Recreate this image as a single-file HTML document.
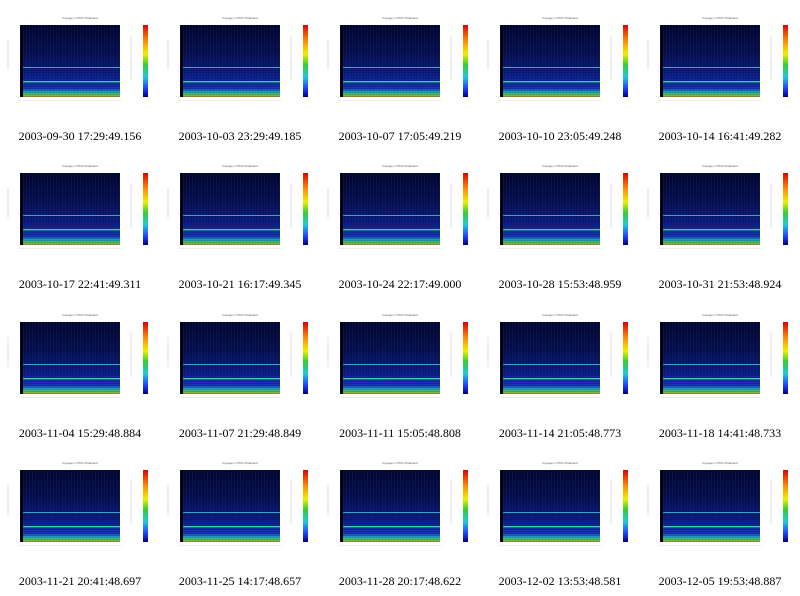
<!DOCTYPE html><html><head><style>
body{margin:0;width:800px;height:596px;background:#fff;position:relative;overflow:hidden;font-family:"Liberation Serif",serif}
.c{position:absolute;width:160px;height:148px}
.t{position:absolute;left:40px;top:16px;width:80px;text-align:center;font:3px "Liberation Sans",sans-serif;color:#666}
.p{position:absolute;left:20px;top:25px;width:100px;height:72px;background:
linear-gradient(to bottom,transparent 0,transparent 56px,#40d8a0 56px,#40d8a0 57.5px,transparent 57.5px),
linear-gradient(to bottom,transparent 0,transparent 42px,#30b0c8 42px,#30b0c8 43px,transparent 43px),
linear-gradient(to bottom,#02062a 0%,#06104e 40%,#0c1e86 70%,#1434b8 88%,#20b0c0 93%,#60d040 97%,#c8a020 100%)}
.p:before{content:"";position:absolute;left:0;top:0;width:3px;height:72px;background:#000}
.p:after{content:"";position:absolute;inset:0;background:repeating-linear-gradient(90deg,rgba(40,70,200,.15) 0 1px,transparent 1px 3px),repeating-linear-gradient(0deg,rgba(0,0,40,.2) 0 1px,transparent 1px 2px)}
.ax{position:absolute;left:18px;top:100px;width:104px;height:8px;border-top:1px solid #eee}
.cb{position:absolute;left:143px;top:25px;width:5px;height:72px;background:linear-gradient(to bottom,#e00000,#ff8000 20%,#f0f000 40%,#30d030 55%,#20c8e0 72%,#2040ff 88%,#000080)}
.yl{position:absolute;left:7px;top:40px;width:2px;height:30px;background:#eee}
.cl{position:absolute;left:130px;top:35px;width:2px;height:45px;background:#eee}
.cap{position:absolute;left:0;top:129px;width:160px;text-align:center;font-size:12px;line-height:14px;color:#000}
</style></head><body>
<div class="c" style="left:0;top:0"><div class="t">Voyager-1 PWS Wideband</div><div class="yl"></div><div class="p"></div><div class="ax"></div><div class="cl"></div><div class="cb"></div><div class="cap">2003-09-30 17:29:49.156</div></div>
<div class="c" style="left:160px;top:0"><div class="t">Voyager-1 PWS Wideband</div><div class="yl"></div><div class="p"></div><div class="ax"></div><div class="cl"></div><div class="cb"></div><div class="cap">2003-10-03 23:29:49.185</div></div>
<div class="c" style="left:320px;top:0"><div class="t">Voyager-1 PWS Wideband</div><div class="yl"></div><div class="p"></div><div class="ax"></div><div class="cl"></div><div class="cb"></div><div class="cap">2003-10-07 17:05:49.219</div></div>
<div class="c" style="left:480px;top:0"><div class="t">Voyager-1 PWS Wideband</div><div class="yl"></div><div class="p"></div><div class="ax"></div><div class="cl"></div><div class="cb"></div><div class="cap">2003-10-10 23:05:49.248</div></div>
<div class="c" style="left:640px;top:0"><div class="t">Voyager-1 PWS Wideband</div><div class="yl"></div><div class="p"></div><div class="ax"></div><div class="cl"></div><div class="cb"></div><div class="cap">2003-10-14 16:41:49.282</div></div>
<div class="c" style="left:0;top:148px"><div class="t">Voyager-1 PWS Wideband</div><div class="yl"></div><div class="p"></div><div class="ax"></div><div class="cl"></div><div class="cb"></div><div class="cap">2003-10-17 22:41:49.311</div></div>
<div class="c" style="left:160px;top:148px"><div class="t">Voyager-1 PWS Wideband</div><div class="yl"></div><div class="p"></div><div class="ax"></div><div class="cl"></div><div class="cb"></div><div class="cap">2003-10-21 16:17:49.345</div></div>
<div class="c" style="left:320px;top:148px"><div class="t">Voyager-1 PWS Wideband</div><div class="yl"></div><div class="p"></div><div class="ax"></div><div class="cl"></div><div class="cb"></div><div class="cap">2003-10-24 22:17:49.000</div></div>
<div class="c" style="left:480px;top:148px"><div class="t">Voyager-1 PWS Wideband</div><div class="yl"></div><div class="p"></div><div class="ax"></div><div class="cl"></div><div class="cb"></div><div class="cap">2003-10-28 15:53:48.959</div></div>
<div class="c" style="left:640px;top:148px"><div class="t">Voyager-1 PWS Wideband</div><div class="yl"></div><div class="p"></div><div class="ax"></div><div class="cl"></div><div class="cb"></div><div class="cap">2003-10-31 21:53:48.924</div></div>
<div class="c" style="left:0;top:297px"><div class="t">Voyager-1 PWS Wideband</div><div class="yl"></div><div class="p"></div><div class="ax"></div><div class="cl"></div><div class="cb"></div><div class="cap">2003-11-04 15:29:48.884</div></div>
<div class="c" style="left:160px;top:297px"><div class="t">Voyager-1 PWS Wideband</div><div class="yl"></div><div class="p"></div><div class="ax"></div><div class="cl"></div><div class="cb"></div><div class="cap">2003-11-07 21:29:48.849</div></div>
<div class="c" style="left:320px;top:297px"><div class="t">Voyager-1 PWS Wideband</div><div class="yl"></div><div class="p"></div><div class="ax"></div><div class="cl"></div><div class="cb"></div><div class="cap">2003-11-11 15:05:48.808</div></div>
<div class="c" style="left:480px;top:297px"><div class="t">Voyager-1 PWS Wideband</div><div class="yl"></div><div class="p"></div><div class="ax"></div><div class="cl"></div><div class="cb"></div><div class="cap">2003-11-14 21:05:48.773</div></div>
<div class="c" style="left:640px;top:297px"><div class="t">Voyager-1 PWS Wideband</div><div class="yl"></div><div class="p"></div><div class="ax"></div><div class="cl"></div><div class="cb"></div><div class="cap">2003-11-18 14:41:48.733</div></div>
<div class="c" style="left:0;top:445px"><div class="t">Voyager-1 PWS Wideband</div><div class="yl"></div><div class="p"></div><div class="ax"></div><div class="cl"></div><div class="cb"></div><div class="cap">2003-11-21 20:41:48.697</div></div>
<div class="c" style="left:160px;top:445px"><div class="t">Voyager-1 PWS Wideband</div><div class="yl"></div><div class="p"></div><div class="ax"></div><div class="cl"></div><div class="cb"></div><div class="cap">2003-11-25 14:17:48.657</div></div>
<div class="c" style="left:320px;top:445px"><div class="t">Voyager-1 PWS Wideband</div><div class="yl"></div><div class="p"></div><div class="ax"></div><div class="cl"></div><div class="cb"></div><div class="cap">2003-11-28 20:17:48.622</div></div>
<div class="c" style="left:480px;top:445px"><div class="t">Voyager-1 PWS Wideband</div><div class="yl"></div><div class="p"></div><div class="ax"></div><div class="cl"></div><div class="cb"></div><div class="cap">2003-12-02 13:53:48.581</div></div>
<div class="c" style="left:640px;top:445px"><div class="t">Voyager-1 PWS Wideband</div><div class="yl"></div><div class="p"></div><div class="ax"></div><div class="cl"></div><div class="cb"></div><div class="cap">2003-12-05 19:53:48.887</div></div>
</body></html>
